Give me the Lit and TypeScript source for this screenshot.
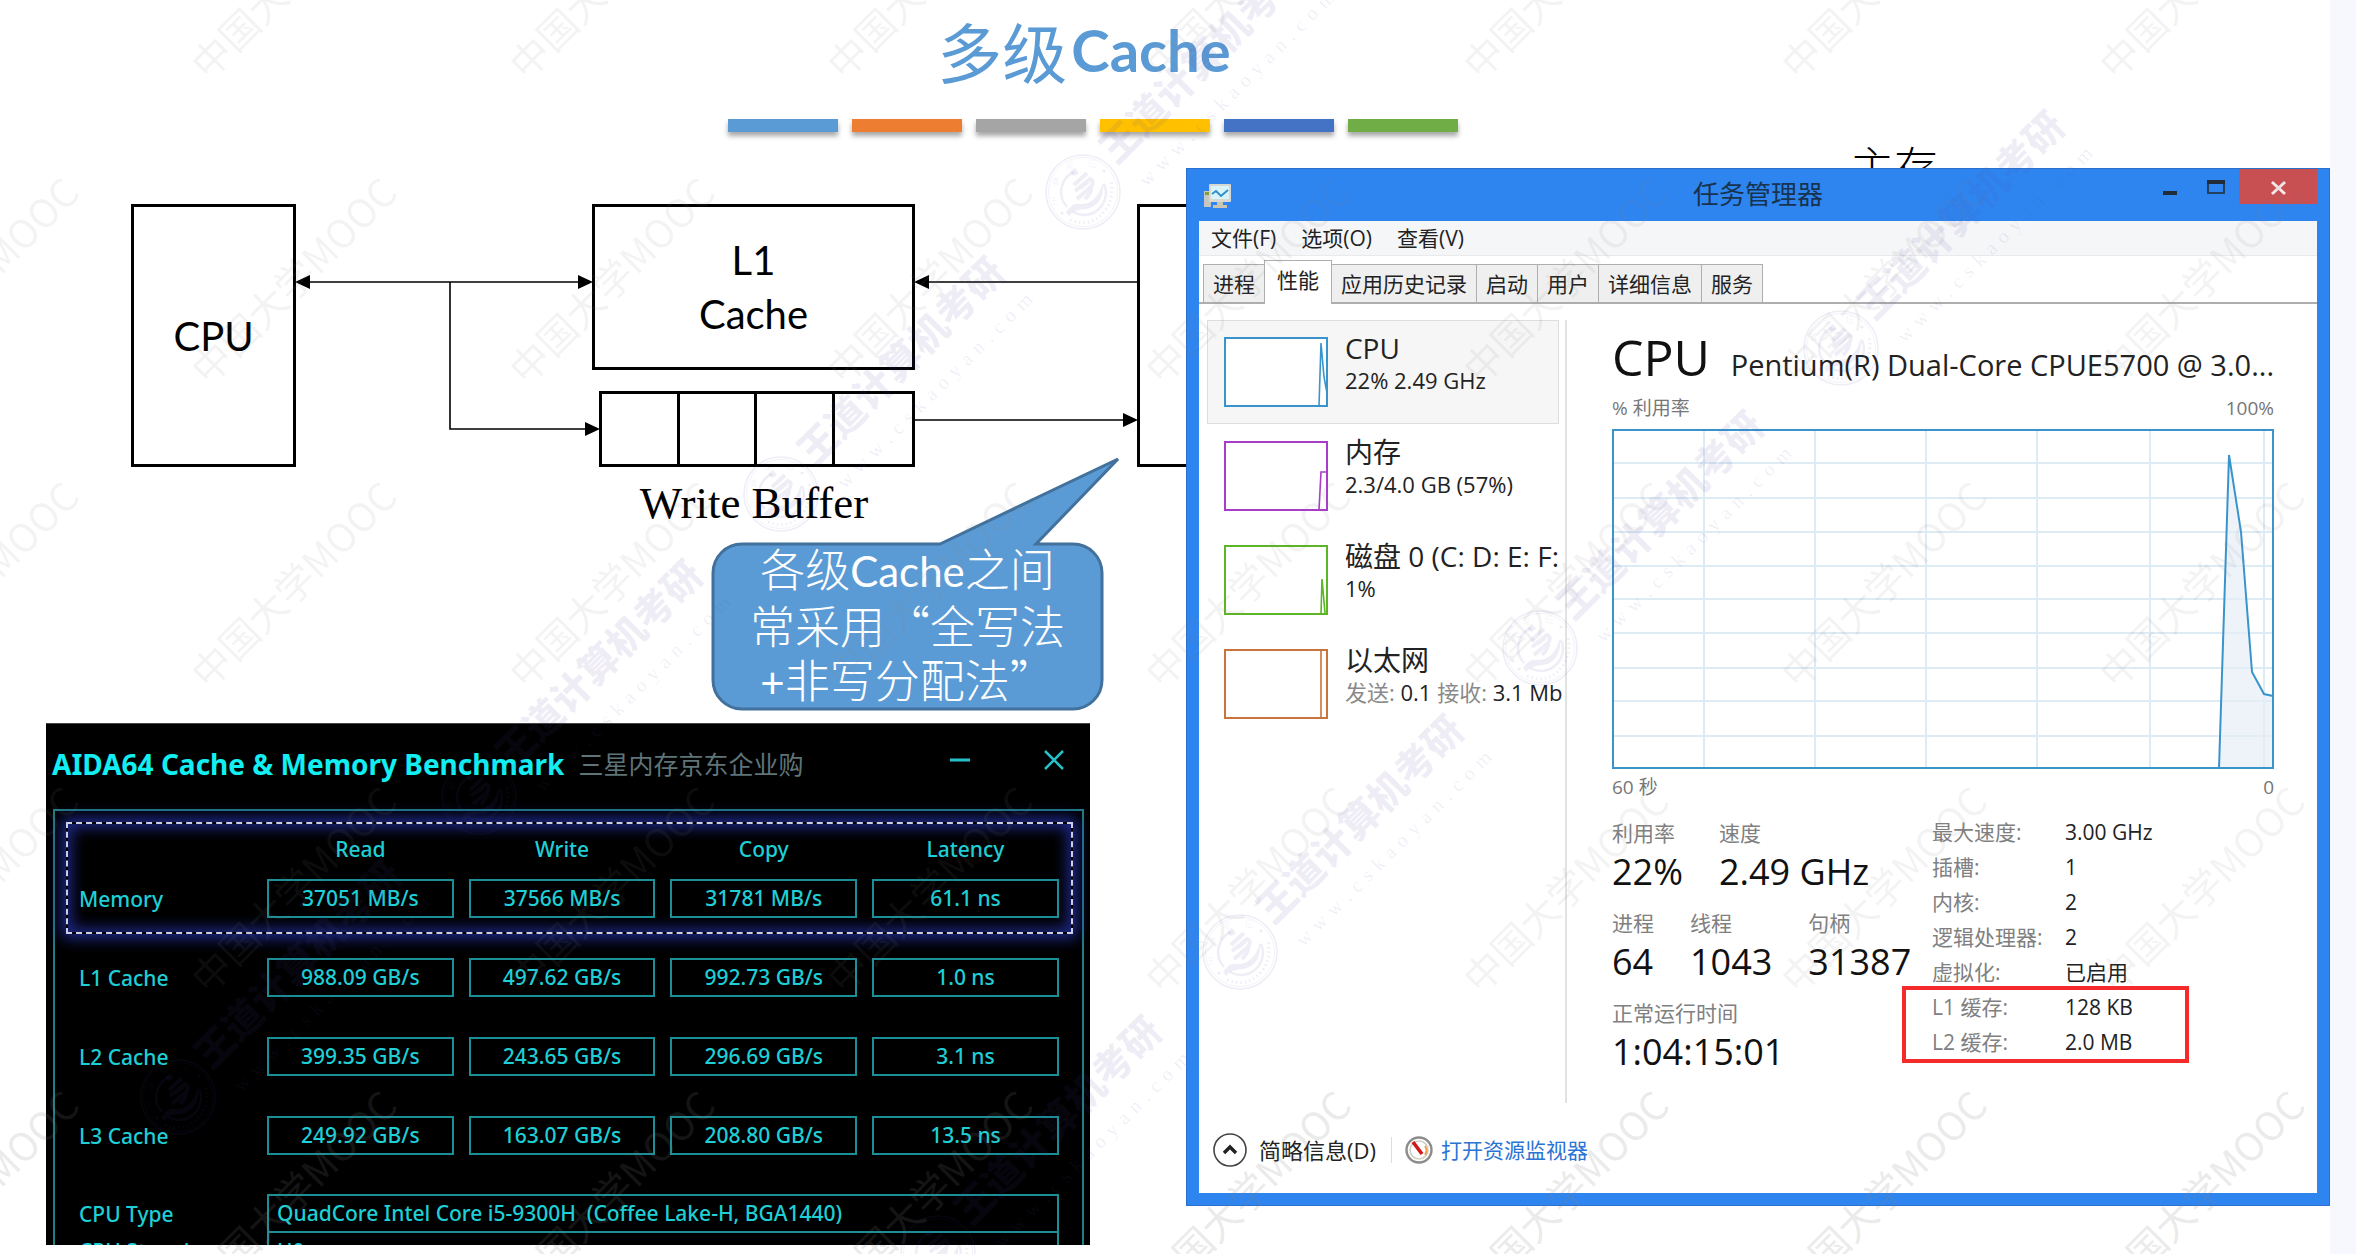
import { LitElement, html, svg, css } from "lit";
import { customElement, state } from "lit/decorators.js";

const MOOC_X = [-26, 292, 610, 928, 1246, 1564, 1882, 2200];
const MOOC_Y = [-26, 279, 583, 888, 1192];
const SEALS = [
  [1083, 192], [781, 494], [479, 797], [178, 1097],
  [1841, 348], [1540, 648], [1240, 952], [938, 1253],
];

@customElement("slide-watermark")
class SlideWatermark extends LitElement {
  static styles = css`
    :host { position: absolute; inset: 0; overflow: hidden; pointer-events: none; }
    .mooc {
      position: absolute; transform: translate(-50%, -50%) rotate(-45deg);
      font: 400 39px/48px "Noto Sans CJK SC", sans-serif;
      color: rgba(128, 128, 128, 0.1); white-space: nowrap;
    }
    .mooc.strong { color: rgba(128, 128, 128, 0.18); }
    .seal { position: absolute; width: 0; height: 0; color: rgba(80, 70, 165, 0.09); }
    .logo { position: absolute; left: -38px; top: -38px; width: 76px; height: 76px; display: block; }
    .run {
      position: absolute; left: 0; top: 0; transform-origin: 0 0;
      transform: rotate(-45deg); padding-left: 42px;
    }
    .brand {
      font: 900 39px/44px "Noto Sans CJK SC", sans-serif; white-space: nowrap;
      margin-top: -34px;
    }
    .url { display: flex; gap: 7px; font: 20px/26px "Liberation Serif", serif; padding-left: 6px; margin-top: 12px; }
    .tiny { font: 8px "Noto Sans CJK SC", sans-serif; fill: currentColor; }
  `;

  private seal() {
    return svg`<svg class="logo" viewBox="-38 -38 76 76" fill="none" stroke="currentColor">
      <circle r="37" stroke-width="1.6"></circle>
      <circle r="34.5" stroke-width="0.8"></circle>
      <path d="M-9 -20A22 22 0 0 0 -16 15M21 -8A22 22 0 0 1 -10 20" stroke-width="2.5"></path>
      <path d="M-13 -20L-8 -24L-4 -19L-9 -16Z" fill="currentColor" stroke="none"></path>
      <path d="M-9 -7L4 -19M-8 -1L7 -13Q12 -11 8 -5L-6 7M-3 -4L5 -10M2 7Q9 0 8 -5" stroke-width="4"></path>
      <path d="M-17 20Q-10 10 -4 12Q14 13 20 -10Q22 12 4 17Q-9 17 -14 24Z" fill="currentColor" stroke="none"></path>
      <circle cx="21" cy="-21" r="1.6" fill="currentColor" stroke="none"></circle>
      <circle cx="-21" cy="21" r="1.6" fill="currentColor" stroke="none"></circle>
      <text class="tiny" stroke="none" x="-33" y="12">王</text>
      <text class="tiny" stroke="none" x="-32" y="-8">道</text>
      <text class="tiny" stroke="none" x="-17" y="-24">论</text>
      <text class="tiny" stroke="none" x="5" y="-25">坛</text>
      <path d="M-13 28Q10 37 24 16Q31 4 28 -12" stroke-width="3" stroke-dasharray="1.5 3"></path>
    </svg>`;
  }

  render() {
    return html`
      ${MOOC_Y.map((y, i) => MOOC_X.map((x) => html`
        <span class="mooc ${i === 4 ? "strong" : ""}" style="left:${x}px;top:${y}px">中国大学MOOC</span>`))}
      ${SEALS.map(([x, y]) => html`
        <div class="seal" style="left:${x}px;top:${y}px">
          ${this.seal()}
          <div class="run">
            <div class="brand">王道计算机考研</div>
            <div class="url">${[..."www.cskaoyan.com"].map((c) => html`<span>${c}</span>`)}</div>
          </div>
        </div>`)}
    `;
  }
}

@customElement("cache-diagram")
class CacheDiagram extends LitElement {
  static styles = css`
    :host { position: absolute; left: 0; top: 0; width: 1200px; height: 720px; font-family: Lato, "Noto Sans CJK SC", sans-serif; color: #000; }
    .wires { position: absolute; left: 0; top: 0; width: 1200px; height: 720px; display: block; }
    .node {
      position: absolute; box-sizing: border-box; border: 3px solid #000;
      display: flex; align-items: center; justify-content: center; text-align: center;
      font-size: 40px; line-height: 54px;
    }
    .cpu { left: 131px; top: 204px; width: 165px; height: 263px; }
    .l1 { left: 592px; top: 204px; width: 323px; height: 166px; }
    .l2 { left: 1137px; top: 204px; width: 165px; height: 263px; }
    .buffer { left: 599px; top: 391px; width: 316px; height: 76px; display: grid; grid-template-columns: repeat(4, 1fr); }
    .slot { height: 100%; border-right: 3px solid #000; }
    .slot:last-child { border-right: 0; }
    .caption { position: absolute; left: 599px; top: 478px; width: 310px; text-align: center; font: 45px/50px "Liberation Serif", serif; }
    .note {
      position: absolute; left: 713px; top: 541px; width: 389px; color: #fff; text-align: center;
      font: 300 45px/54px "Noto Sans CJK SC", sans-serif;
    }
    .latin { font-family: Lato, sans-serif; font-weight: 400; font-size: 42px; }
    .note p { margin: 0; }
  `;

  render() {
    return html`
      <div class="node cpu">CPU</div>
      <div class="node l1">L1<br />Cache</div>
      <div class="node l2"></div>
      <div class="node buffer">
        <span class="slot"></span><span class="slot"></span><span class="slot"></span><span class="slot"></span>
      </div>
      <div class="caption">Write Buffer</div>
      <svg class="wires" viewBox="0 0 1200 720" aria-hidden="true">
        <path d="M305 282H585M450 282V429H590M925 282H1138M914 420H1128" fill="none" stroke="#000" stroke-width="1.6"></path>
        <path d="M295 282l15-7v14zM593 282l-15-7v14zM600 429l-15-7v14zM914 282l15-7v14zM1138 420l-15-7v14z"></path>
        <path d="M742 544H940L1118 459L1036 544H1073A29 29 0 0 1 1102 573V680A29 29 0 0 1 1073 709H742A29 29 0 0 1 713 680V573A29 29 0 0 1 742 544Z"
          fill="#5b9bd5" stroke="#41719c" stroke-width="3"></path>
      </svg>
      <div class="note">
        <p>各级<span class="latin">Cache</span>之间</p>
        <p>常采用“全写法</p>
        <p><span class="latin">+</span>非写分配法”</p>
      </div>
    `;
  }
}

@customElement("aida-window")
class AidaWindow extends LitElement {
  static styles = css`
    :host {
      position: absolute; left: 46px; top: 723px; width: 44.8%; height: 522px; box-sizing: border-box;
      overflow: hidden; background: #000; color: #1fcfd6; border-top: 1px solid #444;
      font: 500 21px/28px "Noto Sans", "Noto Sans CJK SC", sans-serif;
    }
    .bar { display: flex; align-items: center; height: 85px; padding: 0 26px 6px 6px; box-sizing: border-box; }
    .bar h2 { margin: 0; font: 700 28px/36px "Noto Sans", sans-serif; color: #12eef2; white-space: nowrap; }
    .bar small { margin-left: 14px; font-size: 25px; font-weight: 400; color: #5f7478; white-space: nowrap; flex: 1; }
    button { background: none; border: 0; padding: 0; width: 20px; height: 40px; color: #22c3ca; display: block; }
    button svg { display: block; }
    .tools { display: flex; gap: 74px; padding-bottom: 8px; }
    .frame { position: relative; margin: 0 6px 0 7px; border: 2px solid #1f7f86; border-bottom: 0; height: 440px; }
    .focus {
      position: absolute; left: 11px; right: 9px; top: 11px; height: 112px; box-sizing: border-box;
      border: 2px dashed #c9cfe8; box-shadow: 0 0 14px 4px #1f2a90, inset 0 0 14px 4px #1c2680;
    }
    .label { width: 212px; }
    td, th { padding: 0; font-weight: 500; height: 79px; text-align: center; vertical-align: middle; }
    thead th { height: 48px; padding: 8px 15px 0 0; vertical-align: bottom; line-height: 20px; box-sizing: border-box; }
    tbody th { text-align: left; padding-left: 24px; white-space: nowrap; }
    td { padding-right: 15px; }
    table { position: relative; width: calc(100% - 8px); border-collapse: collapse; table-layout: fixed; }
    .cell { display: block; box-sizing: border-box; height: 39px; line-height: 35px; border: 2px solid #1b8f97; }
    .wide { text-align: left; padding-left: 8px; white-space: pre; }
    .type th, .type td { height: 58px; vertical-align: bottom; }
    .type th { padding-bottom: 5px; box-sizing: border-box; }
    .step th, .step td { height: 38px; vertical-align: top; }
    .step .cell { border-top: 0; line-height: 36px; }
    .step th { line-height: 36px; }
  `;

  private rows = [
    ["Memory", "37051 MB/s", "37566 MB/s", "31781 MB/s", "61.1 ns"],
    ["L1 Cache", "988.09 GB/s", "497.62 GB/s", "992.73 GB/s", "1.0 ns"],
    ["L2 Cache", "399.35 GB/s", "243.65 GB/s", "296.69 GB/s", "3.1 ns"],
    ["L3 Cache", "249.92 GB/s", "163.07 GB/s", "208.80 GB/s", "13.5 ns"],
  ];

  render() {
    return html`
      <header class="bar">
        <h2>AIDA64 Cache &amp; Memory Benchmark</h2>
        <small>三星内存京东企业购</small>
        <div class="tools">
          <button aria-label="Minimize"><svg width="20" height="40"><path d="M0 20H20" stroke="currentColor" stroke-width="3"></path></svg></button>
          <button aria-label="Close"><svg width="20" height="40"><path d="M1 11L19 29M19 11L1 29" stroke="currentColor" stroke-width="2.5"></path></svg></button>
        </div>
      </header>
      <div class="frame">
        <div class="focus"></div>
        <table>
          <thead><tr><th class="label"></th><th>Read</th><th>Write</th><th>Copy</th><th>Latency</th></tr></thead>
          <tbody>
            ${this.rows.map(([n, ...v]) => html`<tr><th>${n}</th>${v.map((x) => html`<td><span class="cell">${x}</span></td>`)}</tr>`)}
            <tr class="type"><th>CPU Type</th><td colspan="4"><span class="cell wide">QuadCore Intel Core i5-9300H  (Coffee Lake-H, BGA1440)</span></td></tr>
            <tr class="step"><th>CPU Stepping</th><td colspan="4"><span class="cell wide">U0</span></td></tr>
          </tbody>
        </table>
      </div>
    `;
  }
}

@customElement("task-manager")
class TaskManager extends LitElement {
  static styles = css`
    :host {
      position: absolute; right: 0; top: 168px; width: 49.1%; height: 1038px; box-sizing: border-box;
      background: #2e85f0; border: 1px solid #2a70cc; padding: 0 12px 12px; color: #222;
      display: flex; flex-direction: column;
      font: 21px/28px "Open Sans", "Noto Sans CJK SC", sans-serif;
    }
    button { font: inherit; color: inherit; background: none; border: 0; padding: 0; }
    .title { display: grid; grid-template-columns: 1fr auto 1fr; height: 52px; color: #17334f; }
    .title h2 { margin: 0; font-size: 26px; line-height: 50px; font-weight: 400; }
    .app { display: block; margin: 14px 0 0 4px; }
    .ctl { display: flex; justify-content: flex-end; height: 35px; }
    .ctl svg { display: block; }
    .close { background: #c84f52; color: #fff; }
    .pane { flex: 1; min-height: 0; background: #fff; display: flex; flex-direction: column; }
    .menu { display: flex; gap: 25px; height: 34px; padding-left: 12px; background: #f5f6f8; border-bottom: 1px solid #e9eaec; align-items: center; }
    .menu button { white-space: nowrap; }
    .tabs { display: flex; align-items: flex-end; height: 46px; padding-left: 5px; border-bottom: 2px solid #aeaeae; }
    .tab { height: 38px; padding: 0 9px; border: 1px solid #aeaeae; border-bottom: 0; background: #efefef; margin-left: -1px; white-space: nowrap; }
    .tab[aria-selected="true"] { height: 44px; padding: 0 12px 6px; background: #fff; margin-bottom: -2px; }
    .body { flex: 1; display: grid; grid-template-columns: 368px 1fr; padding-top: 16px; min-height: 0; }
    .side { display: flex; flex-direction: column; overflow: hidden; border-right: 2px solid #e2e2e2; height: 783px; padding-left: 8px; }
    .res {
      display: grid; grid-template-columns: 104px 1fr; column-gap: 17px; height: 104px; flex: none; text-align: left;
      align-items: start; padding: 16px 0 0 16px; border: 1px solid transparent; box-sizing: border-box;
      margin-right: 6px; white-space: nowrap;
    }
    .res[aria-pressed="true"] { background: #f6f6f6; border-color: #ddd; }
    .res svg { display: block; }
    .res strong { display: block; font-weight: 400; font-size: 28px; line-height: 28px; margin-top: -3px; }
    .res em { display: block; font-style: normal; font-size: 22px; line-height: 32px; margin-top: 2px; }
    .dim { color: #8a8a8a; }
    .main { padding: 4px 43px 0 45px; min-width: 0; }
    .head { display: flex; align-items: baseline; justify-content: space-between; white-space: nowrap; margin-bottom: 4px; }
    .head h1 { margin: 0; font-size: 50px; line-height: 66px; font-weight: 400; color: #111; }
    .head span { font-size: 29px; line-height: 40px; color: #222; }
    .axis { display: flex; justify-content: space-between; font-size: 19px; line-height: 28px; color: #777; }
    .chart { display: block; width: 100%; height: 340px; margin: 7px 0 4px; }
    .stats { display: grid; grid-template-columns: 320px 1fr; margin-top: 18px; }
    .group { display: flex; gap: 36px; height: 90px; white-space: nowrap; }
    .k { color: #808080; }
    .stat span { display: block; }
    .stat output { display: block; font-size: 36px; line-height: 44px; color: #111; margin-top: 3px; }
    .spec { display: grid; grid-template-columns: 133px 1fr; line-height: 35px; margin: -4px 0 0; white-space: nowrap; position: relative; align-content: start; }
    .spec dt { color: #808080; } .spec dd { margin: 0; }
    .mark { position: absolute; left: -30px; top: 171px; width: 287px; height: 77px; box-sizing: border-box; border: 4px solid #f52a2a; }
    .foot { display: flex; align-items: center; height: 86px; padding-left: 14px; white-space: nowrap; }
    .brief { display: flex; align-items: center; gap: 12px; font-size: 22px; }
    .foot i { width: 1px; height: 26px; background: #ddd; margin: 0 13px 0 15px; }
    .foot a { display: flex; align-items: center; gap: 8px; color: #2a74d4; text-decoration: none; }
  `;

  @state() private tab = "性能";
  @state() private res = 0;

  private resources = [
    { name: "CPU", sub: html`22% 2.49 GHz`, color: "#3a94cc", line: "M95 69L97 6L100 40L103 56" },
    { name: "内存", sub: html`2.3/4.0 GB (57%)`, color: "#a83ccb", line: "M95 69L97 31H103" },
    { name: "磁盘 0 (C: D: E: F:", sub: html`1%`, color: "#5cb524", line: "M97 69L98 34L101 68" },
    { name: "以太网", sub: html`<span class="dim">发送:</span> 0.1 <span class="dim">接收:</span> 3.1 Mb`, color: "#c9743c", line: "M97 1V69" },
  ];

  render() {
    const tabs = ["进程", "性能", "应用历史记录", "启动", "用户", "详细信息", "服务"];
    const specs = [["最大速度:", "3.00 GHz"], ["插槽:", "1"], ["内核:", "2"], ["逻辑处理器:", "2"], ["虚拟化:", "已启用"], ["L1 缓存:", "128 KB"], ["L2 缓存:", "2.0 MB"]];
    const stat = (k: string, v: string) => html`<div class="stat"><span class="k">${k}</span><output>${v}</output></div>`;
    return html`
      <header class="title">
        <svg class="app" width="30" height="26" viewBox="0 0 30 26" aria-hidden="true">
          <rect x="1" y="8" width="7" height="16" fill="#c5c6c0"></rect><rect x="2" y="9" width="4" height="3" fill="#7ea03c"></rect>
          <rect x="6" y="1" width="22" height="18" rx="1" fill="#d8d8d2"></rect><rect x="8" y="3" width="18" height="13" fill="#d9f3fb"></rect>
          <path d="M9 11L13 8L18 13L25 7" fill="none" stroke="#3090c8" stroke-width="2"></path>
          <path d="M14 19H20V22H24V25H10V22H14Z" fill="#c9c5b4"></path>
        </svg>
        <h2>任务管理器</h2>
        <div class="ctl">
          <button aria-label="最小化"><svg width="36" height="35"><path d="M0 24H14" stroke="#222b38" stroke-width="4"></path></svg></button>
          <button aria-label="最大化"><svg width="40" height="35"><path d="M9 12V24H25V12" fill="none" stroke="#24405f" stroke-width="2"></path><path d="M8 13H26" stroke="#222b38" stroke-width="4"></path></svg></button>
          <button class="close" aria-label="关闭"><svg width="78" height="35"><path d="M33 13L46 25M46 13L33 25" stroke="#f6e8e8" stroke-width="3"></path></svg></button>
        </div>
      </header>
      <div class="pane">
        <nav class="menu"><button>文件(F)</button><button>选项(O)</button><button>查看(V)</button></nav>
        <div class="tabs" role="tablist">
          ${tabs.map((t) => html`<button class="tab" role="tab" aria-selected=${this.tab === t} @click=${() => (this.tab = t)}>${t}</button>`)}
        </div>
        <div class="body">
          <div class="side">
            ${this.resources.map((r, i) => html`
              <button class="res" aria-pressed=${this.res === i} @click=${() => (this.res = i)}>
                <svg width="104" height="70" fill="none" stroke=${r.color} aria-hidden="true">
                  <rect x="1" y="1" width="102" height="68" fill="#fff" stroke-width="2"></rect><path d=${r.line} stroke-width="1.6"></path>
                </svg>
                <span><strong>${r.name}</strong><em>${r.sub}</em></span>
              </button>`)}
          </div>
          <section class="main">
            <div class="head"><h1>CPU</h1><span>Pentium(R) Dual-Core CPUE5700 @ 3.0...</span></div>
            <div class="axis"><span>% 利用率</span><span>100%</span></div>
            <svg class="chart" viewBox="0 0 662 340" preserveAspectRatio="none" fill="none" role="img" aria-label="CPU 利用率">
              <path d="M92 1V339M203 1V339M314 1V339M425 1V339M538 1V339M652 1V339M1 34H661M1 69H661M1 103H661M1 137H661M1 170H661M1 204H661M1 239H661M1 272H661M1 307H661" stroke="#dcebf4" stroke-width="2"></path>
              <path d="M607 339L617 26L629 103L640 243L652 265L661 267V339Z" fill="#e6eef7" fill-opacity="0.7"></path>
              <path d="M607 339L617 26L629 103L640 243L652 265L661 267" stroke="#3a94cc" stroke-width="2"></path>
              <rect x="1" y="1" width="660" height="338" stroke="#3a94cc" stroke-width="2"></rect>
            </svg>
            <div class="axis"><span>60 秒</span><span>0</span></div>
            <div class="stats">
              <div>
                <div class="group">${stat("利用率", "22%")}${stat("速度", "2.49 GHz")}</div>
                <div class="group">${stat("进程", "64")}${stat("线程", "1043")}${stat("句柄", "31387")}</div>
                <div class="group">${stat("正常运行时间", "1:04:15:01")}</div>
              </div>
              <dl class="spec">
                ${specs.map(([k, v]) => html`<dt>${k}</dt><dd>${v}</dd>`)}
                <div class="mark"></div>
              </dl>
            </div>
          </section>
        </div>
        <footer class="foot">
          <button class="brief">
            <svg width="34" height="34" fill="none" aria-hidden="true"><circle cx="17" cy="17" r="16" stroke="#444" stroke-width="1.6"></circle><path d="M11 20L17 14L23 20" stroke="#222" stroke-width="3.4"></path></svg>
            简略信息(D)
          </button>
          <i></i>
          <a href="#">
            <svg width="28" height="28" fill="none" aria-hidden="true"><circle cx="14" cy="14" r="12.5" fill="#fff" stroke="#8c8c8c" stroke-width="2.4"></circle><circle cx="14" cy="14" r="9" stroke="#cfcfc0" stroke-width="1.6"></circle><path d="M20 10A8 8 0 0 1 20 19" stroke="#f0a050" stroke-width="2"></path><path d="M8 6L17 18" stroke="#d01818" stroke-width="3.6"></path></svg>
            打开资源监视器
          </a>
        </footer>
      </div>
    `;
  }
}

@customElement("app-root")
class AppRoot extends LitElement {
  static styles = css`
    :host { display: block; background: #f6f8fd; padding-right: 26px; }
    .slide { position: relative; background: #fff; min-height: 100vh; overflow: hidden; }
    .head { display: flex; flex-direction: column; align-items: center; padding-right: 144px; }
    .head h1 { margin: 0; padding-right: 18px; display: flex; align-items: center; height: 100px; color: #5b9bd5; font: 400 65px/100px "Noto Sans CJK SC", sans-serif; }
    .head b { font: 700 58px/100px Lato, sans-serif; margin-left: 4px; }
    .rule { display: flex; gap: 14px; margin-top: 19px; }
    .rule span { width: 110px; height: 13px; box-shadow: 0 4px 5px rgba(0, 0, 0, 0.35); }
    .c1 { background: #5b9bd5; } .c2 { background: #ed7d31; } .c3 { background: #a5a5a5; }
    .c4 { background: #ffc000; } .c5 { background: #4472c4; } .c6 { background: #70ad47; }
    .store { position: absolute; left: 1850px; top: 135px; font: 300 44px/60px "Noto Sans CJK SC", sans-serif; color: #000; }
    .aux { position: absolute; left: 1770px; top: 1243px; font: 40px/56px "Noto Sans CJK SC", sans-serif; color: #b5301c; }
  `;

  render() {
    return html`
      <main class="slide" lang="zh-CN">
        <header class="head">
          <h1>多级<b>Cache</b></h1>
          <div class="rule">${[1, 2, 3, 4, 5, 6].map((n) => html`<span class="c${n}"></span>`)}</div>
        </header>
        <div class="store">主存</div>
        <div class="aux">辅存</div>
        <cache-diagram></cache-diagram>
        <aida-window></aida-window>
        <task-manager></task-manager>
        <slide-watermark></slide-watermark>
      </main>
    `;
  }
}
